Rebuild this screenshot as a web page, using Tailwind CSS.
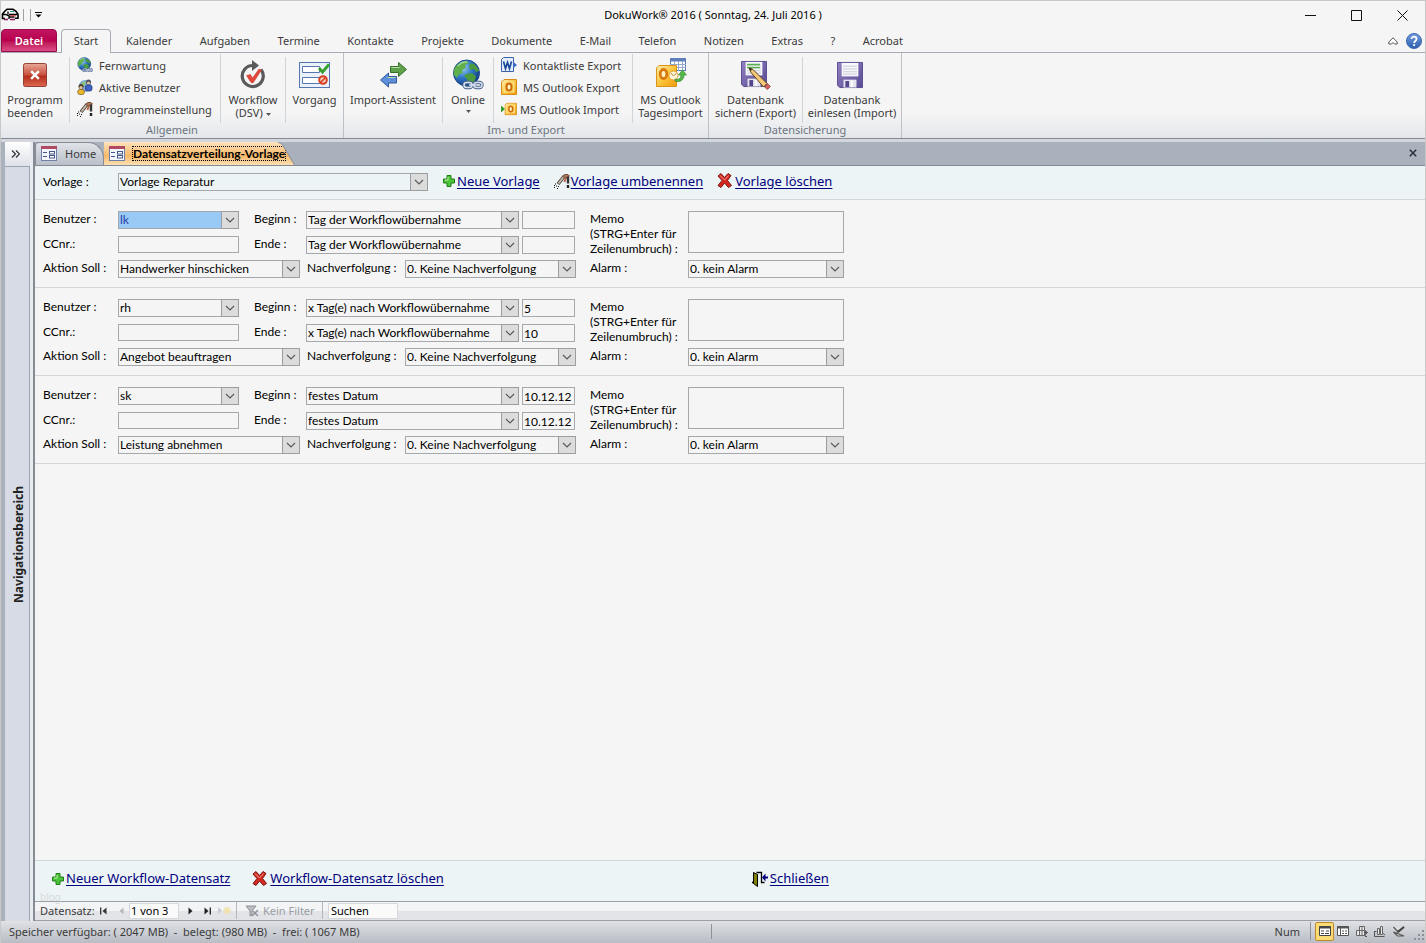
<!DOCTYPE html>
<html lang="de">

<head>
    <meta charset="UTF-8">
    <meta name="viewport" content="width=device-width, initial-scale=1.0">
    <title>DokuWork 2016</title>
    <script src="https://cdn.jsdelivr.net/npm/@tailwindcss/browser@4"></script>
</head>

<body class="flex h-screen flex-col overflow-hidden border border-b-0 border-[#c8c8c8] bg-[#f5f5f5] font-['Noto_Sans','Segoe_UI',sans-serif] text-[11px] leading-[13px] text-[#3b3b3b]">

    <!-- Symbole -->
    <svg class="absolute h-0 w-0">
        <defs>
            <radialGradient id="gGlobe" cx=".35" cy=".3" r=".75">
                <stop offset="0" stop-color="#9fd0f5" /><stop offset=".5" stop-color="#2f78c8" /><stop offset="1" stop-color="#123a80" />
            </radialGradient>
            <linearGradient id="gRed" x1="0" y1="0" x2="0" y2="1">
                <stop offset="0" stop-color="#e8a898" /><stop offset=".5" stop-color="#c9503f" /><stop offset=".55" stop-color="#b52d1c" /><stop offset="1" stop-color="#dd6a50" />
            </linearGradient>
            <linearGradient id="gGold" x1="0" y1="0" x2="1" y2="1">
                <stop offset="0" stop-color="#fff0b0" /><stop offset=".5" stop-color="#fbc43a" /><stop offset="1" stop-color="#f09a10" />
            </linearGradient>
            <linearGradient id="gDisk" x1="0" y1="0" x2="1" y2="1">
                <stop offset="0" stop-color="#9182c0" /><stop offset="1" stop-color="#5b4a96" />
            </linearGradient>
            <linearGradient id="gHelp" x1="0" y1="0" x2="0" y2="1">
                <stop offset="0" stop-color="#6f9be0" /><stop offset="1" stop-color="#2f5fae" />
            </linearGradient>
        </defs>
        <symbol id="i-chain" viewBox="0 0 22 9">
            <g fill="none" stroke="#4a6288" stroke-width="3.4"><rect x="2" y="2" width="8" height="5" rx="2.5" /><rect x="12" y="2" width="8" height="5" rx="2.5" /><path d="M7 4.500h8" /></g>
            <g fill="none" stroke="#d5e0f0" stroke-width="1.500"><rect x="2" y="2" width="8" height="5" rx="2.5" /><rect x="12" y="2" width="8" height="5" rx="2.5" /><path d="M7 4.500h8" /></g>
        </symbol>
        <symbol id="i-globe" viewBox="0 0 32 32">
            <circle cx="14.500" cy="14" r="13" fill="url(#gGlobe)" stroke="#1d4a8c" />
            <path d="M5 6c3-3 7-4 10-4l2 2-4 2 1 3-4 2 1 3-4 1-2 4-3-3c-1-4 0-7 3-10z" fill="#5fb04a" />
            <path d="M19 4c4 1 7 4 8 8l-3 1-2-3-4 1-1-4zM14 15l6-1 4 3-1 4-4 5-3-1-1-5-3-3z" fill="#4b9a3e" />
            <path d="M6 7c3-3 5-4 9-4" stroke="#c5eab0" fill="none" />
            <use href="#i-chain" x="10" y="21" width="22" height="10" />
        </symbol>
        <symbol id="i-door" viewBox="0 0 16 16">
            <path d="M4.500 1.500h5v10h3M0 11.500h2" fill="none" stroke="#000" stroke-width="1.300" />
            <path d="M1.500 1.500l4 2v12l-4-3z" fill="#808000" stroke="#000" />
            <path d="M16 5.500h-2.500v-3l-3.500 4 3.500 4v-3h2.500z" fill="#000080" />
        </symbol>
        <symbol id="i-plus" viewBox="0 0 12 12">
            <path d="M4 .5h4v3.500h3.500v4H8v3.500H4V8H.5V4H4z" fill="#4cc43c" stroke="#1d7d17" />
            <path d="M5 2v3H2" stroke="#b5f0a0" fill="none" />
        </symbol>
        <symbol id="i-cross" viewBox="0 0 15 15">
            <path d="M1 3l3-2.500 3.500 4 3.500-4 3 2-3.500 5 4 5-3 2-4-4.500-3.500 4.500-3-2 4-5z" fill="#d22a20" stroke="#7f1712" />
            <path d="M3 2.500l4.500 4.500 4-4.500" stroke="#f29a8c" fill="none" />
        </symbol>
        <symbol id="i-tools" viewBox="0 0 16 16">
            <path d="M4 11l6-7.500" stroke="#4b4035" stroke-width="3.600" /><path d="M4.500 10.500L9.500 4" stroke="#c9c2b4" stroke-width="1.800" />
            <path d="M8.500 3l2.500-1.500h3l1.500 1.500-2 1.500-3 .5z" fill="#b07a58" stroke="#5a3a28" stroke-width=".8" />
            <path d="M12 4.500L10.500 9" stroke="#b8603c" stroke-width="1.800" /><path d="M14 3.500v7" stroke="#333" stroke-width="2.400" /><path d="M14 12v3" stroke="#222" stroke-width="2.400" />
            <path d="M0 14.500h1M2 13h1M1 11h1M4 13.500h1M3 15.500h1M0 12.500h1" stroke="#111" />
        </symbol>
        <symbol id="i-users" viewBox="0 0 16 16">
            <circle cx="8" cy="7" r="6" fill="#7fa9dc" /><path d="M4 5c2-3 4-3 5-3l-1 4-3 3z" fill="#8dc47a" />
            <circle cx="11.500" cy="3" r="2.500" fill="#4c4c5c" /><circle cx="11.500" cy="4" r="1.600" fill="#d8c0a0" /><rect x="8.500" y="6" width="6.500" height="6" rx="2" fill="#3d63c8" stroke="#1d3070" stroke-width=".7" />
            <circle cx="4" cy="7.500" r="2.500" fill="#4a3a2a" /><circle cx="4" cy="8.500" r="1.600" fill="#e0c8a0" /><rect x=".8" y="10.500" width="6.500" height="5" rx="2" fill="#eab62e" stroke="#7a5410" stroke-width=".7" />
        </symbol>
        <symbol id="i-outlook" viewBox="0 0 16 16">
            <path d="M3 .5h12.500v15H.5V3z" fill="url(#gGold)" stroke="#d98d16" />
            <rect x="3" y="3" width="10" height="10" fill="#fbcf58" stroke="#fdeaa8" stroke-width=".8" />
            <ellipse cx="8" cy="8" rx="2.500" ry="3.500" fill="#fff3c4" stroke="#cc6c0a" stroke-width="2" />
        </symbol>
        <symbol id="i-form" viewBox="0 0 16 15">
            <rect x=".5" y=".5" width="15" height="14" fill="#f2f5fb" stroke="#6f80a8" /><rect x="0" y="0" width="16" height="3" fill="#b04a62" />
            <path d="M2 6.500h4M2 10.500h4" stroke="#44588c" /><rect x="8.500" y="5.500" width="5" height="2.500" fill="#fff" stroke="#44588c" /><rect x="8.500" y="9.500" width="5" height="2.500" fill="#fff" stroke="#44588c" />
        </symbol>
        <symbol id="i-disk" viewBox="0 0 28 28">
            <path d="M.5.5h27v27H3l-2.500-2.500z" fill="url(#gDisk)" stroke="#55458c" />
            <rect x="5" y="1" width="18" height="14.500" fill="#f8f8fc" /><path d="M6.500 4.500h15M6.500 7.500h15M6.500 10.500h15M6.500 13h15" stroke="#c6c8d4" />
            <rect x="7" y="19" width="14" height="8.500" fill="#e4e4ee" /><rect x="9" y="20.500" width="4" height="6.500" fill="#55458c" /><path d="M16 20v7" stroke="#fff" stroke-width="2" />
        </symbol>
        <symbol id="i-caret" viewBox="0 0 10 6">
            <path d="M1 1l4 4 4-4" fill="none" stroke="#5a5a5a" stroke-width="1.200" />
        </symbol>
    </svg>

    <!-- Titelleiste -->
    <header class="grid h-[28px] shrink-0 grid-cols-[1fr_auto_1fr] items-center">
        <div class="flex items-center gap-1">
            <svg class="h-[14px] w-[18px]" viewBox="0 0 18 14"><path d="M4 3l2-1.700h6l3 2 2 3v4h-3M4 3L1.500 6v4.500H4" fill="none" stroke="#000" stroke-width="1.600" /><path d="M1.500 6.500h3l3.500 1.500v3M7 3.500v3M8 6.500h8M8.500 9h5" fill="none" stroke="#000" stroke-width="1.300" /><path d="M3 11.500h4M9 11.500h5" stroke="#8a1d5e" stroke-width="1.500" /><path d="M9 3.500h4" stroke="#2d9a8c" /><path d="M9 7.800h6" stroke="#d43b3b" /></svg>
            <span class="h-3 w-px bg-[#a0a0a0]"></span>
            <span class="ml-[2px] h-3 w-px bg-[#a0a0a0]"></span>
            <button aria-label="Symbolleiste anpassen"><svg class="h-[6px] w-[7px]" viewBox="0 0 7 6"><path d="M0 .5h7" stroke="#000" /><path d="M.5 2.500h6l-3 3z" /></svg></button>
        </div>
        <h1 class="pb-[2px] text-[11px] text-black">DokuWork® 2016 ( Sonntag, 24. Juli 2016 )</h1>
        <div class="flex items-center justify-end gap-[35px] pr-[17px]">
            <button aria-label="Minimieren"><svg class="h-[11px] w-[11px]" viewBox="0 0 11 11"><path d="M0 5.500h11" stroke="#111" /></svg></button>
            <button aria-label="Maximieren"><svg class="h-[11px] w-[11px]" viewBox="0 0 11 11"><path d="M.5.5h10v10H.5z" fill="none" stroke="#111" /></svg></button>
            <button aria-label="Fenster schließen"><svg class="h-[11px] w-[11px]" viewBox="0 0 11 11"><path d="M.5.500l10 10M10.500.500l-10 10" stroke="#111" /></svg></button>
        </div>
    </header>

    <!-- Registerkarten -->
    <nav class="flex h-[24px] shrink-0 items-end border-b border-[#a7abb3]">
        <button class="h-[23px] w-[56px] rounded-t-sm border border-[#960b48] bg-linear-to-b from-[#c01560] via-[#b8004f] to-[#dc4a86] font-semibold text-white">Datei</button>
        <button class="-mb-px ml-1 h-[24px] w-[50px] rounded-t-sm border border-b-0 border-[#a7abb3] bg-[#f5f5f5] pb-[2px]">Start</button>
        <div id="tabs" class="ml-[15px] flex h-[23px] w-[777px] items-center justify-between"></div>
        <div class="ml-auto flex h-[23px] items-center gap-2 pr-[3px]">
            <button aria-label="Menüband minimieren"><svg class="h-[8px] w-[10px]" viewBox="0 0 10 8"><path d="M.8 5L5 .8 9.200 5v2H6.500L5 5.500 3.500 7H.8z" fill="#fff" stroke="#555" /></svg></button>
            <button aria-label="Hilfe"><svg class="h-4 w-4" viewBox="0 0 17 17"><circle cx="8.500" cy="8.500" r="8" fill="url(#gHelp)" stroke="#3a66b0" /><path d="M5.800 6.500c0-3.400 5.400-3.400 5.400 0 0 2-2.500 2-2.500 4" fill="none" stroke="#fff" stroke-width="1.900" /><circle cx="8.600" cy="12.800" r="1.200" fill="#fff" /></svg></button>
        </div>
    </nav>

    <!-- Menüband -->
    <div class="flex h-[86px] shrink-0 border-b border-[#868b94] bg-linear-to-b from-[#f5f5f5] from-70% to-[#e3e6ea]">
        <section class="flex w-[343px] flex-col border-r border-[#bdc1c7]">
            <div class="flex h-[70px] divide-x divide-[#d0d3d8] pt-1">
                <button class="flex w-[69px] flex-col items-center">
                    <span class="flex h-[36px] items-center"><svg class="h-[24px] w-[24px]" viewBox="0 0 25 25"><rect x=".5" y=".5" width="24" height="24" rx="2" fill="url(#gRed)" stroke="#8e3a2e" /><path d="M8.500 8.500l8 8M16.500 8.500l-8 8" stroke="#fff" stroke-width="2.600" /></svg></span>
                    <span class="text-left">Programm<br>beenden</span>
                </button>
                <div class="-mt-[3px] flex w-[151px] flex-col pl-[7px] *:flex *:h-[22px] *:items-center *:gap-[6px]">
                    <button><svg class="h-4 w-4"><use href="#i-globe" /></svg>Fernwartung</button>
                    <button><svg class="h-4 w-4"><use href="#i-users" /></svg>Aktive Benutzer</button>
                    <button><svg class="h-4 w-4"><use href="#i-tools" /></svg>Programmeinstellung</button>
                </div>
                <button class="flex w-[65px] flex-col items-center">
                    <span class="flex h-[36px] items-center"><svg class="h-[30px] w-[28px]" viewBox="0 0 28 30"><path d="M22 9.500a10.500 10.500 0 1 1-8-4" fill="none" stroke="#5a5a5c" stroke-width="3.200" /><path d="M13 0l7 5.500-7 5.500z" fill="#5a5a5c" /><path d="M7.500 15.500l4-1 2 3.500 6.500-9 2.500 1-8.500 13-2-.5z" fill="#e2483a" stroke="#c03024" stroke-width=".5" /></svg></span>
                    <span>Workflow<br>(DSV) <svg class="inline h-[3px] w-[5px] align-middle" viewBox="0 0 5 3"><path d="M0 0h5L2.500 3z" fill="#555" /></svg></span>
                </button>
                <button class="flex w-[57px] flex-col items-center">
                    <span class="flex h-[36px] items-center"><svg class="h-[26px] w-[31px]" viewBox="0 0 31 26"><rect x=".5" y=".5" width="30" height="25" fill="#eaf1fb" stroke="#5876ae" /><path d="M3.500 4.500h17v6h-17zM3.500 15.500h17v6h-17z" fill="#fff" stroke="#5876ae" /><path d="M20 6l3.500 4L30 2.500" fill="none" stroke="#35a02b" stroke-width="2.800" /><circle cx="24" cy="18" r="3.800" fill="#f6d0c4" stroke="#d93f1e" stroke-width="2" /><path d="M21.500 20.500l5-5" stroke="#d93f1e" stroke-width="1.600" /></svg></span>
                    <span>Vorgang</span>
                </button>
            </div>
            <h2 class="text-center text-[#6c7580]">Allgemein</h2>
        </section>

        <section class="flex w-[365px] flex-col border-r border-[#bdc1c7]">
            <div class="flex h-[70px] divide-x divide-[#d0d3d8] pt-1">
                <button class="flex w-[99px] flex-col items-center">
                    <span class="flex h-[36px] items-center"><svg class="h-[26px] w-[27px]" viewBox="0 0 27 26"><path d="M10.500 4.500h8v-4l8 7-8 7v-4h-8z" fill="#5fa04a" stroke="#37702b" /><path d="M16.500 14.500h-8v-3.500l-8 7 8 7v-4h8z" fill="#5f8fd8" stroke="#30589c" /><path d="M11.500 5.500h8M7.500 15.500h8" stroke="#b8dca8" /></svg></span>
                    <span>Import-Assistent</span>
                </button>
                <button class="flex w-[51px] flex-col items-center">
                    <span class="flex h-[36px] items-center"><svg class="h-[32px] w-[32px]"><use href="#i-globe" /></svg></span>
                    <span>Online</span>
                    <svg class="mt-1 h-[3px] w-[5px]" viewBox="0 0 5 3"><path d="M0 0h5L2.500 3z" fill="#555" /></svg>
                </button>
                <div class="-mt-[3px] flex w-[139px] flex-col pl-[7px] *:flex *:h-[22px] *:items-center *:gap-[6px]">
                    <button><svg class="h-4 w-4" viewBox="0 0 16 16"><path d="M2.500.5h10v14h-12v-12z" fill="#e4edfa" stroke="#3a62a8" /><path d="M2.500 4.500L4.500 11.500 6.500 5.500 8.500 11.500 10.500 4.500" fill="none" stroke="#1d4c9c" stroke-width="1.700" /><path d="M12.500 5l3.500 3-3.500 3z" fill="#3a70c8" /></svg>Kontaktliste Export</button>
                    <button><svg class="h-4 w-4"><use href="#i-outlook" /></svg>MS Outlook Export</button>
                    <button><svg class="-mr-[3px] h-4 w-4" viewBox="0 0 16 16"><path d="M0 4.500l4 3.500-4 3.500z" fill="#35a02b" /><use href="#i-outlook" x="3.500" y="1.500" width="12.500" height="13" /></svg>MS Outlook Import</button>
                </div>
                <button class="flex w-[75px] flex-col items-center">
                    <span class="flex h-[36px] items-center"><svg class="mb-1 h-[30px] w-[32px]" viewBox="0 0 32 30"><rect x="15.500" y=".5" width="15" height="12" fill="#fff" stroke="#5876ae" /><rect x="15" y="0" width="16" height="3.500" fill="#5f80bc" /><path d="M15 6.500h16M15 9.500h16M19.500 3v10M23.500 3v10M27.500 3v10" stroke="#92a9d0" /><path d="M4 7.500h17.500v21H1.500V10z" fill="url(#gGold)" stroke="#dc9418" /><ellipse cx="8.500" cy="16" rx="3.300" ry="4.500" fill="#fff3c4" stroke="#d87a10" stroke-width="2.800" /><circle cx="18.500" cy="17.500" r="4.500" fill="#fff5d8" stroke="#e0a030" /><path d="M16 15l2.500 3 3-3" fill="none" stroke="#b88a40" /><path d="M20 21c4 1 6-1 6-4h-2.500l4-5 4 5h-2.500c0 5-4 8-9 6z" fill="#55b848" stroke="#2c8424" stroke-width=".6" /></svg></span>
                    <span>MS Outlook<br>Tagesimport</span>
                </button>
            </div>
            <h2 class="text-center text-[#6c7580]">Im- und Export</h2>
        </section>

        <section class="flex w-[193px] flex-col border-r border-[#bdc1c7]">
            <div class="flex h-[70px] divide-x divide-[#d0d3d8] pt-1">
                <button class="flex w-[94px] flex-col items-center">
                    <span class="flex h-[36px] items-center"><svg class="h-[30px] w-[32px]" viewBox="0 0 32 30"><use href="#i-disk" x="1" y="0" width="26" height="28" /><path d="M7 4.500h13M7 7.500h13" stroke="#58b04c" stroke-width="1.300" /><path d="M9 8l4 1.500 14 14-3.500 3.500L11 12.500z" fill="#f4c878" stroke="#5c4420" /><path d="M9 8l3 1-1 2z" fill="#222" /><path d="M24.500 27l3-3.500 3 3-3 3z" fill="#d0605a" stroke="#803030" stroke-width=".6" /></svg></span>
                    <span>Datenbank<br>sichern (Export)</span>
                </button>
                <button class="flex w-[98px] flex-col items-center">
                    <span class="flex h-[36px] items-center"><svg class="mr-1 h-[28px] w-[26px]" viewBox="0 0 26 28"><use href="#i-disk" width="26" height="28" /></svg></span>
                    <span>Datenbank<br>einlesen (Import)</span>
                </button>
            </div>
            <h2 class="text-center text-[#6c7580]">Datensicherung</h2>
        </section>
    </div>

    <!-- Arbeitsbereich -->
    <div class="flex min-h-0 grow border-t-3 border-[#d3d7dd] bg-[#a9b1bc]">
        <aside class="ml-1 flex w-[30px] shrink-0 flex-col border-r-2 border-[#868b94] bg-[#e9ecf1]">
            <button class="h-[25px] w-[25px] border-b border-[#9aa3b0] bg-linear-to-b from-white to-[#dde1e8] pr-1" aria-label="Navigationsbereich öffnen"><svg class="mx-auto h-[8px] w-[9px]" viewBox="0 0 9 8"><path d="M1 .5L4.500 4 1 7.500M5 .5L8.500 4 5 7.500" fill="none" stroke="#333" stroke-width="1.200" /></svg></button>
            <div class="flex w-[25px] grow items-center justify-center border-r border-[#9aa3b0] bg-[#d6dbe5] pl-1">
                <span class="rotate-180 text-[12px] leading-[14px] font-bold text-[#222] [writing-mode:vertical-rl]">Navigationsbereich</span>
            </div>
        </aside>

        <main class="flex min-w-0 grow flex-col">
            <div class="flex h-[24px] shrink-0 items-end border-b border-[#868b94]">
                <button class="flex h-[23px] w-[69px] items-center gap-2 rounded-tl-sm rounded-tr-2xl border border-b-0 border-[#868b94] bg-linear-to-b from-[#e0e3e8] to-[#b9bfc9] pb-px pl-[5px]"><svg class="h-[15px] w-4"><use href="#i-form" /></svg>Home</button>
                <div class="bg-[#868b94] [clip-path:polygon(0_0,174px_0,179px_12%,191px_100%,0_100%)]">
                    <button class="flex h-[23px] w-[191px] items-center gap-2 bg-linear-to-b from-[#fde3bd] via-[#f6b868] via-60% to-[#fbe0b4] pl-[5px] font-['Lato','Noto_Sans',sans-serif] text-[12px] font-bold text-black [clip-path:polygon(0_0,173px_0,178px_12%,190px_100%,0_100%)]"><svg class="h-[15px] w-4 shrink-0"><use href="#i-form" /></svg><span class="outline-1 outline-dotted outline-black">Datensatzverteilung-Vorlage</span></button>
                </div>
                <button class="mr-[8px] mb-[8px] ml-auto" aria-label="Registerkarte schließen"><svg class="h-[8px] w-[8px]" viewBox="0 0 8 8"><path d="M.8.800l6.400 6.400M7.200.800L.8 7.200" stroke="#2b2f38" stroke-width="1.500" /></svg></button>
            </div>

            <div class="flex h-[34px] shrink-0 items-center border-b border-[#d3d7d8] bg-[#edf4f5] pb-[2px] pl-2 text-black">
                <label for="vorlage" class="w-[75px] font-['Lato','Noto_Sans',sans-serif] text-[12px]">Vorlage :</label>
                <div class="relative h-[18px] w-[310px] font-['Lato','Noto_Sans',sans-serif] text-[12px] leading-[16px]">
                    <select id="vorlage" class="block h-full w-full appearance-none border border-[#a6a8ab] pl-px">
                        <option>Vorlage Reparatur</option>
                    </select>
                    <span class="pointer-events-none absolute inset-y-0 right-0 flex w-[18px] items-center justify-center border border-[#9b9da0] bg-[#dcdcdc]"><svg class="h-[6px] w-[10px]"><use href="#i-caret" /></svg></span>
                </div>
                <a href="#" class="ml-[15px] flex items-center gap-[2px] pb-[2px] text-[13px] leading-[16px] text-[#00007f]"><svg class="h-3 w-3"><use href="#i-plus" /></svg><span class="underline underline-offset-2">Neue Vorlage</span></a>
                <a href="#" class="ml-[14px] flex items-center gap-px pb-[2px] text-[13px] leading-[16px] text-[#00007f]"><svg class="h-4 w-4"><use href="#i-tools" /></svg><span class="underline underline-offset-2">Vorlage umbenennen</span></a>
                <a href="#" class="ml-[14px] flex items-center gap-[3px] pb-[2px] text-[13px] leading-[16px] text-[#00007f]"><svg class="h-[15px] w-[15px]"><use href="#i-cross" /></svg><span class="underline underline-offset-2">Vorlage löschen</span></a>
            </div>

            <div id="records" class="min-h-0 grow overflow-hidden bg-[#f5f5f5] font-['Lato','Noto_Sans',sans-serif] text-[12px] leading-[16px] text-black"></div>

            <footer class="relative flex h-[41px] shrink-0 items-center border-t border-[#d3d7d8] bg-[#edf4f5] pb-[5px] pl-[17px] text-[13px] text-[#00007f]">
                <a href="#" class="flex items-center gap-[2px]"><svg class="h-3 w-3"><use href="#i-plus" /></svg><span class="underline underline-offset-2">Neuer Workflow-Datensatz</span></a>
                <a href="#" class="ml-[22px] flex items-center gap-[3px]"><svg class="h-[15px] w-[15px]"><use href="#i-cross" /></svg><span class="underline underline-offset-2">Workflow-Datensatz löschen</span></a>
                <a href="#" class="ml-[308px] flex items-center gap-[2px]"><svg class="h-4 w-4"><use href="#i-door" /></svg><span class="underline underline-offset-2">Schließen</span></a>
                <span class="absolute -bottom-[3px] left-[5px] text-[10px] text-[#d5dadb]">blog</span>
            </footer>

            <div class="flex h-[20px] shrink-0 items-center border-y border-[#9b9fa8] bg-linear-to-b from-[#f3f4f6] from-50% to-[#e3e4e8] to-50% pb-px">
                <label for="satz" class="ml-[5px] w-[58px]">Datensatz:</label>
                <button class="ml-[2px]" aria-label="Erster Datensatz"><svg class="h-[8px] w-[7px]" viewBox="0 0 7 8"><path d="M.7.500v7" stroke="#333" stroke-width="1.300" /><path d="M6.500.5v7L2.500 4z" fill="#333" /></svg></button>
                <button class="ml-3" aria-label="Vorheriger Datensatz"><svg class="h-[8px] w-[5px]" viewBox="0 0 5 8"><path d="M4.500.5v7L.5 4z" fill="#b4b7bd" /></svg></button>
                <input id="satz" value="1 von 3" class="ml-[5px] h-[16px] w-[50px] border border-[#d6d8dc] bg-[#fafafa] pl-px text-black">
                <button class="ml-[9px]" aria-label="Nächster Datensatz"><svg class="h-[8px] w-[5px]" viewBox="0 0 5 8"><path d="M.5.5v7l4-3.500z" fill="#222" /></svg></button>
                <button class="ml-[11px]" aria-label="Letzter Datensatz"><svg class="h-[8px] w-[7px]" viewBox="0 0 7 8"><path d="M6.300.500v7" stroke="#222" stroke-width="1.300" /><path d="M.5.5v7l4-3.500z" fill="#222" /></svg></button>
                <button class="ml-[7px]" aria-label="Neuer Datensatz"><svg class="h-[9px] w-[13px]" viewBox="0 0 13 9"><path d="M0 1v7l4-3.500z" fill="#c9cbd0" /><path d="M9 .5v8M5 4.500h8M6.200 1.700l5.600 5.600M11.800 1.700L6.200 7.300" stroke="#f0e2a8" stroke-width="1.300" /></svg></button>
                <button class="ml-[5px] flex h-full w-[87px] items-center gap-1 border-x border-[#b4b7bd] pl-2 text-[#9a9da3]"><svg class="h-3 w-[14px]" viewBox="0 0 14 12"><path d="M1 1h10L7 6v4l-2 1V6z" fill="#b9bcc2" stroke="#8f9298" /><path d="M8 6l5 5M13 5l-6 6" stroke="#8f9298" stroke-width="1.500" /></svg>Kein Filter</button>
                <input aria-label="Suchen" value="Suchen" class="ml-[5px] h-[16px] w-[70px] border border-[#d6d8dc] bg-[#fafafa] pl-[2px] text-black">
            </div>
        </main>
    </div>

    <!-- Statusleiste -->
    <div class="flex h-[22px] shrink-0 items-center bg-linear-to-b from-[#dfe1e5] to-[#b9bdc4] pb-[2px] pl-2">
        <span class="w-[703px] border-r border-[#8e939b] py-px whitespace-pre">Speicher verfügbar: ( 2047 MB)  -  belegt: (980 MB)  -  frei: ( 1067 MB)</span>
        <span class="mr-[10px] ml-auto">Num</span>
        <span class="h-[18px] w-px bg-[#8e939b]"></span>
        <button class="ml-1 flex h-[19px] w-[19px] items-center justify-center rounded-xs border border-[#c08a2c] bg-[#fbdc74]" aria-label="Formularansicht"><svg class="h-[10px] w-3" viewBox="0 0 12 10"><path d="M.5.5h11v9H.5z" fill="#fff" stroke="#444" /><path d="M0 1.500h12" stroke="#444" stroke-width="2" /><path d="M2 5h3M2 7.500h3M7 5h3M6 7.500h4" stroke="#444" /></svg></button>
        <button class="ml-[3px]" aria-label="Datenblattansicht"><svg class="h-[10px] w-3" viewBox="0 0 12 10"><path d="M.5.5h11v9H.5z" fill="#fff" stroke="#555" /><path d="M0 1.500h12" stroke="#555" stroke-width="2" /><path d="M3.500 2v8M5 5h2M8 5h2M5 7.500h2M8 7.500h2" stroke="#555" /></svg></button>
        <button class="ml-[7px]" aria-label="PivotTable-Ansicht"><svg class="h-[11px] w-3" viewBox="0 0 12 11"><path d="M3.500.5h5v9h-5zM.5 4.500h9v5h-9zM6 .5v9" fill="#e8e8e8" stroke="#666" /><path d="M8 6.500h3.500M9.800 5l1.700 1.500L9.800 8M9 10.500h2" stroke="#555" fill="none" /></svg></button>
        <button class="ml-[6px]" aria-label="PivotChart-Ansicht"><svg class="h-[11px] w-3" viewBox="0 0 12 11"><path d="M3.500 2.500h2v6h-2zM6.500.5h2v8h-2z" fill="#e8e8e8" stroke="#666" /><path d="M.5 5v5.500h10M9 7.500l2 1.500M.5 5.500h2" stroke="#555" fill="none" /></svg></button>
        <button class="ml-[7px]" aria-label="Entwurfsansicht"><svg class="h-[11px] w-3" viewBox="0 0 12 11"><path d="M.5 1l4 4.500L11 .8M.5 6l4 4h6.500z" fill="#ddd" stroke="#555" stroke-width="1.200" /><path d="M4.500 6.500L11 1" stroke="#444" stroke-width="1.800" /></svg></button>
        <svg class="mt-[9px] ml-[8px] h-[11px] w-[12px]" viewBox="0 0 12 11"><path d="M9 1h2M5 5h2M9 5h2M1 9h2M5 9h2M9 9h2" stroke="#8b9098" stroke-width="2" /></svg>
    </div>

    <script>
        const tabs = ['Kalender', 'Aufgaben', 'Termine', 'Kontakte', 'Projekte', 'Dokumente', 'E-Mail', 'Telefon', 'Notizen', 'Extras', '?', 'Acrobat'];

        const records = [
            { benutzer: 'lk', beginn: 'Tag der Workflowübernahme', ende: 'Tag der Workflowübernahme', v1: '', v2: '', aktion: 'Handwerker hinschicken', active: true },
            { benutzer: 'rh', beginn: 'x Tag(e) nach Workflowübernahme', ende: 'x Tag(e) nach Workflowübernahme', v1: '5', v2: '10', aktion: 'Angebot beauftragen' },
            { benutzer: 'sk', beginn: 'festes Datum', ende: 'festes Datum', v1: '10.12.12', v2: '10.12.12', aktion: 'Leistung abnehmen' },
        ];

        function combo(id, value, width, color = '') {
            return `<div class="relative h-[18px] shrink-0 ${width}">
                <select id="${id}" class="block h-full w-full appearance-none border border-[#a6a8ab] pl-px ${color}"><option>${value}</option></select>
                <span class="pointer-events-none absolute inset-y-0 right-0 flex w-[18px] items-center justify-center border border-[#9b9da0] bg-[#dcdcdc]"><svg class="h-[6px] w-[10px]"><use href="#i-caret" /></svg></span>
            </div>`;
        }

        document.getElementById('tabs').innerHTML = tabs.map(t => `<button>${t}</button>`).join('');

        document.getElementById('records').innerHTML = records.map((r, i) => `
            <form class="flex h-[88px] border-b border-[#d3d5d6] pt-[11px] pl-2">
                <div class="grid w-[533px] grid-rows-[25px_24px_18px]">
                    <div class="flex">
                        <label for="benutzer${i}" class="w-[75px]">Benutzer :</label>
                        ${combo('benutzer' + i, r.benutzer, 'w-[121px]', r.active ? 'bg-[#99c9f5] text-[#2b3fa8]' : '')}
                        <label for="beginn${i}" class="ml-[15px] w-[52px]">Beginn :</label>
                        ${combo('beginn' + i, r.beginn, 'w-[213px]')}
                        <input aria-label="Beginn Wert" value="${r.v1}" class="ml-[3px] h-[18px] w-[53px] border border-[#a6a8ab] pl-px">
                    </div>
                    <div class="flex">
                        <label for="cc${i}" class="w-[75px]">CCnr.:</label>
                        <input id="cc${i}" class="h-[17px] w-[121px] border border-[#a6a8ab]">
                        <label for="ende${i}" class="ml-[15px] w-[52px]">Ende :</label>
                        ${combo('ende' + i, r.ende, 'w-[213px]')}
                        <input aria-label="Ende Wert" value="${r.v2}" class="ml-[3px] h-[18px] w-[53px] border border-[#a6a8ab] pl-px">
                    </div>
                    <div class="flex">
                        <label for="aktion${i}" class="w-[75px]">Aktion Soll :</label>
                        ${combo('aktion' + i, r.aktion, 'w-[182px]')}
                        <label for="nach${i}" class="ml-[7px] w-[98px]">Nachverfolgung :</label>
                        ${combo('nach' + i, '0. Keine Nachverfolgung', 'w-[171px]')}
                    </div>
                </div>
                <div class="ml-[14px] grid grid-cols-[98px_156px] grid-rows-[49px_18px]">
                    <label for="memo${i}" class="leading-[15px]">Memo<br>(STRG+Enter für Zeilenumbruch) :</label>
                    <textarea id="memo${i}" class="h-[42px] resize-none border border-[#a6a8ab]"></textarea>
                    <label for="alarm${i}">Alarm :</label>
                    ${combo('alarm' + i, '0. kein Alarm', 'w-[156px]')}
                </div>
            </form>`).join('');
    </script>
</body>

</html>
